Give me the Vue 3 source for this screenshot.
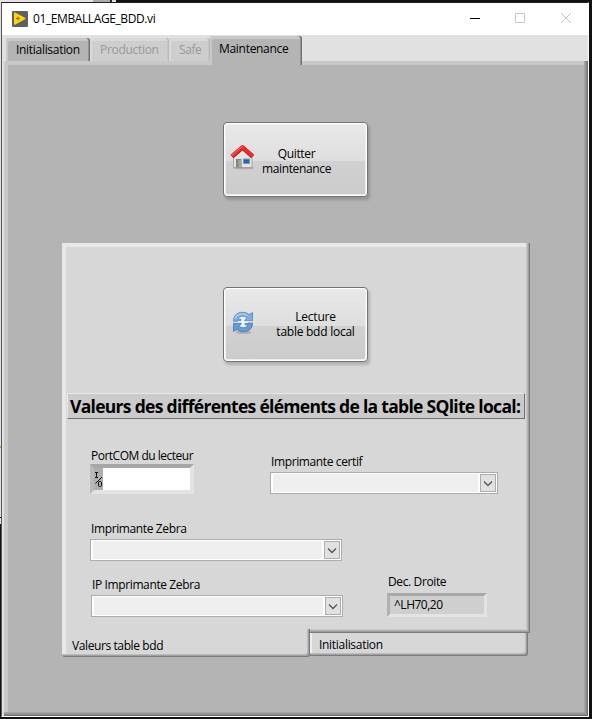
<script setup>
const tabs = [
  { name: 'Initialisation', cls: 'tab-init' },
  { name: 'Production', cls: 'tab-prod disabled' },
  { name: 'Safe', cls: 'tab-safe disabled' },
  { name: 'Maintenance', cls: 'tab-maint active' },
]
const printers = [
  { label: 'Imprimante Zebra', cls: 'zebra' },
  { label: 'IP Imprimante Zebra', cls: 'ip' },
]
</script>

<template>
  <div class="desktop">
    <div class="window">
      <header class="titlebar">
        <svg class="app-icon" width="16" height="16" viewBox="0 0 16 16">
          <rect width="16" height="16" rx="1" fill="#5c6166" />
          <path d="M2 2 Q2 1.200 3 1.600 L13 6.800 Q14 7.500 13 8.300 L3.500 13.400 Q2 14 2 13Z" fill="#ffd60a" />
          <path d="M4 7.500h4M6 5.500v4" stroke="#8a6d1c" stroke-width="1" />
        </svg>
        <span class="title">01_EMBALLAGE_BDD.vi</span>
        <svg class="win-buttons" width="110" height="32" viewBox="0 0 110 32">
          <path d="M13 15.500h10" stroke="#000" />
          <rect x="58.500" y="10.500" width="9" height="9" fill="none" stroke="#c9c9c9" />
          <path d="M104 10l10 10M114 10l-10 10" stroke="#c4c4c4" fill="none" />
        </svg>
      </header>

      <nav class="tabs">
        <div v-for="t in tabs" :key="t.name" class="tab" :class="t.cls"><span>{{ t.name }}</span></div>
      </nav>

      <main class="page">
        <button class="action">
          <svg class="house" width="26" height="26" viewBox="0 0 26 26">
            <ellipse cx="13.500" cy="23" rx="10.500" ry="1.300" fill="#999" opacity=".7" />
            <path d="M3.500 11 L12.500 4 L22 11 V22.500 H3.500Z" fill="#e3e4e4" stroke="#999" stroke-width=".8" />
            <rect x="6" y="14" width="5.500" height="8.500" fill="#85857a" />
            <rect x="8.500" y="15" width="3" height="7" fill="#a8a79a" />
            <rect x="13.500" y="14" width="6" height="4.500" fill="#2f63aa" stroke="#7897bd" />
            <path d="M2 11.500 L12.500 2.500 L22.700 11.500" fill="none" stroke="#b91e20" stroke-width="4.400" stroke-linejoin="round" />
            <path d="M2 11 L12.500 2.100 L22.700 11" fill="none" stroke="#ea2c31" stroke-width="3.400" stroke-linejoin="round" />
            <path d="M2 10 L12.500 1.300" fill="none" stroke="#f27578" stroke-width="1" />
          </svg>
          <span class="caption quit"><span>Quitter</span><span>maintenance</span></span>
        </button>

        <section class="panel">
          <div class="panel-body">
            <button class="action">
              <svg class="refresh" width="22" height="24" viewBox="0 0 22 24">
                <ellipse cx="11.500" cy="21.500" rx="8" ry="1.600" fill="#999" opacity=".6" />
                <ellipse cx="11" cy="11" rx="8" ry="7" fill="#f1f4f7" />
                <path d="M1.500 10.200 C1.200 4.500 5.500 1.200 10.500 1.300 C13.500 1.300 15.500 2.200 17 3.600 L20.500 1.600 V9.700 H12.500 L14.800 6.600 C11.500 4.400 7 5 6.200 8.200 H9 V9.400 H6.500 L6 10.200Z" fill="#82aedd" stroke="#4f84c2" stroke-width=".8" stroke-linejoin="round" />
                <path d="M20.500 12 C20.800 17.500 16.500 20.800 11.500 20.700 C8.500 20.700 6.500 19.800 5 18.400 L1.500 20.400 V12.300 H9.500 L7.200 15.400 C10.500 17.600 15 17 15.800 13.800 H13 V12.600 H15.500 L16 12Z" fill="#689ad2" stroke="#4478b9" stroke-width=".8" stroke-linejoin="round" />
                <path d="M3 7.500 C4.500 3 10 1.500 15.500 4.500" fill="none" stroke="#b5d0ec" stroke-width="1.200" />
              </svg>
              <span class="caption read"><span>Lecture</span><span>table bdd local</span></span>
            </button>

            <h1 class="heading"><span>Valeurs des différentes éléments de la table SQlite local:</span></h1>

            <div class="form">
              <div class="col-left">
                <div class="field port">
                  <label>PortCOM du lecteur</label>
                  <div class="port-box">
                    <svg width="9" height="23" viewBox="0 0 9 23">
                      <path d="M1 4.500h3M2.500 4.500v5M1 9.500h3M1.500 15.500L8 9" fill="none" stroke="#111" />
                      <rect x="4.500" y="13.500" width="3" height="5" rx="1.200" fill="none" stroke="#111" />
                    </svg>
                    <div class="port-value"></div>
                  </div>
                </div>
                <div v-for="p in printers" :key="p.label" class="field" :class="p.cls">
                  <label>{{ p.label }}</label>
                  <div class="combo">
                    <div class="combo-value"></div>
                    <div class="combo-btn">
                      <svg width="14" height="16" viewBox="0 0 14 16"><path d="M3 6.500l4 4 4-4" fill="none" stroke="#555" stroke-width="1.300" /></svg>
                    </div>
                  </div>
                </div>
              </div>
              <div class="col-right">
                <div class="field certif">
                  <label>Imprimante certif</label>
                  <div class="combo">
                    <div class="combo-value"></div>
                    <div class="combo-btn">
                      <svg width="14" height="16" viewBox="0 0 14 16"><path d="M3 6.500l4 4 4-4" fill="none" stroke="#555" stroke-width="1.300" /></svg>
                    </div>
                  </div>
                </div>
                <div class="field dec">
                  <label>Dec. Droite</label>
                  <div class="dec-box"><span>^LH70,20</span></div>
                </div>
              </div>
            </div>
          </div>
          <div class="panel-tabs">
            <div class="ptab current"><span>Valeurs table bdd</span></div>
            <div class="ptab other"><span>Initialisation</span></div>
          </div>
        </section>
      </main>
    </div>
  </div>
</template>

<style>
body { margin: 0; overflow: hidden; }
</style>

<style scoped>
* { box-sizing: border-box; }
.desktop {
  width: 592px; height: 719px; padding: 2px 3px 2px 1px;
  background:
    linear-gradient(90deg, #e4e4e4 0 93px, #aaa 93px 110px, #222 110px 112px, #ddd 112px 116px, transparent 116px) 0 0 / 592px 2px no-repeat,
    linear-gradient(#dfe2e5 0 446px, #cf9a35 446px 448px, #dfe2e5 448px 517px, #111 517px 518px, #dfe2e5 518px 524px, transparent 524px) 0 0 / 1px 719px no-repeat,
    #11110f;
  font-family: "Open Sans", "Noto Sans", sans-serif; font-size: 12px; color: #000;
}
.window { height: 715px; border: 1px solid #555; border-top-color: #222; border-right: 1px solid #fff; border-bottom: 1px solid #fff; background: #e1e1e1; display: flex; flex-direction: column; }
.titlebar { height: 32px; flex: none; background: #fff; display: flex; align-items: center; padding-left: 10px; }
.app-icon { margin-top: -1px; }
.title { margin-left: 5px; line-height: 16px; letter-spacing: -.4px; white-space: nowrap; }
.win-buttons { margin-left: auto; margin-right: 21px; overflow: visible; }

.tabs { height: 26px; flex: none; display: flex; align-items: flex-end; padding-left: 4px; position: relative; z-index: 1; }
.tab { height: 23px; background: #b4b4b4; border-radius: 3px 3px 0 0; padding-top: 3px; line-height: 17px; white-space: nowrap; box-shadow: inset -1px 0 #6f6f6f, inset -2px 0 #929292, inset 2px 3px #c8c8c8; }
.tab span { display: block; }
.tab-init { width: 84px; padding-left: 10px; letter-spacing: -.3px; }
.tab.disabled { background: #cecece; color: #999; box-shadow: inset -1px 0 #b9b9b9, inset -2px 0 #c5c5c5, inset 2px 3px #d9d9d9; }
.tab-prod { width: 79px; padding-left: 10px; letter-spacing: -.3px; }
.tab-safe { width: 41px; padding-left: 10px; letter-spacing: -.4px; }
.tab.active { width: 92px; height: 29px; margin-bottom: -4px; padding-left: 9px; line-height: 19px; letter-spacing: -.3px; box-shadow: inset -1px 0 #6f6f6f, inset -2px 0 #929292, inset 2px 3px #c8c8c8; }

.page { flex: 1; margin: 0 0 0 2px; background: #b4b4b4; box-shadow: inset -1px -1px #6f6f6f, inset -2px -2px #8a8a8a, inset -3px -3px #999, inset -4px -4px #a6a6a6, inset 4px 4px #c8c8c8; display: flex; flex-direction: column; padding: 4px 4px 4px 58px; }

.action { appearance: none; width: 145px; height: 75px; flex: none; padding: 0; font: inherit; color: #000; display: flex; align-items: flex-start; border: 1px solid #737373; border-radius: 4px; background: linear-gradient(#e9e9e9 0, #dedede 38px, #d1d1d1 38px, #cbcbcb 100%); box-shadow: inset 0 0 0 1px #fff, inset 0 0 0 2px #ededed, 2px 3px 3px rgba(0,0,0,.18); }
.page > .action { margin: 57px 0 0 161px; }
.caption { display: flex; flex-direction: column; align-items: center; line-height: 15px; white-space: nowrap; }
.house { margin: 22px 0 0 6px; }
.refresh { margin: 23px 0 0 8px; }
.quit { margin: 23px 0 0 6px; width: 69px; letter-spacing: -.35px; }
.read { margin: 21px 0 0 22px; width: 79px; letter-spacing: -.25px; }

.panel { width: 468px; margin-top: 46px; }
.panel-body { height: 390px; background: #d7d7d7; padding: 4px 3px 3px 4px; box-shadow: inset -1px -1px #7c7c7c, inset -2px -2px #9d9d9d, inset -3px -3px #b5b5b5, inset -4px -4px #c8c8c8, inset 4px 4px #e8e8e8; display: flex; flex-direction: column; }
.panel-body > .action { margin: 40px 0 0 157px; }
.heading { margin: 31px 0 0 1px; width: 458px; height: 26px; background: #cbcbcb; border: 1px solid; border-color: #e8e8e8 #707070 #707070 #e8e8e8; font-size: 17.500px; line-height: 24px; font-weight: 700; padding-left: 2px; white-space: nowrap; letter-spacing: -.7px; }
.form { display: flex; margin-left: 24px; }
.col-left { width: 180px; padding-top: 29px; }
.col-right { width: 230px; padding-top: 35px; }
.field label { display: block; height: 16px; line-height: 16px; padding-left: 1px; white-space: nowrap; letter-spacing: -.38px; }
.port label { letter-spacing: -.5px; }
.port-box { width: 104px; height: 30px; background: #aeaeae; border: 4px solid; border-color: #a6a6a6 #e3e3e3 #e3e3e3 #b9b9b9; display: flex; }
.port-box svg { flex: none; }
.port-value { background: #fff; flex: 1; }
.zebra { margin-top: 27px; }
.ip { margin: 16px 0 0 1px; }
.combo { width: 252px; height: 22px; margin-top: 2px; border: 1px solid #acacaf; background: #fff; display: flex; padding: 1px; }
.combo-value { flex: 1; background: #efefef; margin-left: 1px; margin-right: 2px; }
.combo-btn { width: 16px; border: 1px solid #adadad; background: #e1e1e1; }
.combo-btn svg { display: block; }
.certif .combo { width: 228px; }
.dec { margin: 80px 0 0 117px; }
.dec-box { width: 100px; height: 24px; margin-top: 3px; background: #cfcfcf; border: 3px solid; border-color: #a8a8a8 #e3e3e3 #e3e3e3 #b0b0b0; line-height: 18px; padding-left: 4px; letter-spacing: -.5px; }

.panel-tabs { display: flex; align-items: flex-start; }
.ptab { background: #d7d7d7; white-space: nowrap; }
.current { width: 248px; height: 28px; margin-top: -4px; padding: 4px 0 0 10px; line-height: 25px; letter-spacing: -.4px; border-radius: 0 0 3px 3px; box-shadow: inset -1px -1px #7c7c7c, inset -2px -2px #a0a0a0, inset -3px -3px #bcbcbc, inset 4px 0 #e8e8e8; }
.other { width: 218px; height: 23px; padding-left: 9px; line-height: 23px; letter-spacing: -.3px; border-radius: 0 0 3px 0; box-shadow: inset -1px -1px #7c7c7c, inset -2px -2px #a0a0a0, inset -3px -3px #bcbcbc, inset 2px 0 #eee; }
</style>
